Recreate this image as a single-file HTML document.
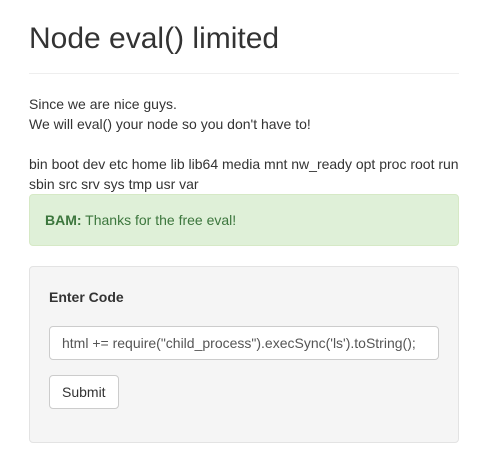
<!DOCTYPE html>
<html><head><style>
*{box-sizing:border-box}
body{margin:0;background:#fff;font-family:"Liberation Sans",sans-serif;font-size:14px;line-height:20px;color:#333}
h1{position:absolute;left:29px;top:19px;margin:0;font-size:30px;font-weight:500;line-height:40px;color:#333}
.hr{position:absolute;left:29px;top:73px;width:430px;height:1px;background:#eee}
.t{position:absolute;left:29px;top:94px;white-space:nowrap}
.al{position:absolute;left:29px;top:194px;width:430px;height:52px;background:#dff0d8;border:1px solid #d6e9c6;border-radius:4px;color:#3c763d;padding:15px}
.w{position:absolute;left:29px;top:266px;width:430px;height:177px;background:#f5f5f5;border:1px solid #e3e3e3;border-radius:4px}
.lb{position:absolute;left:19px;top:20px;font-weight:bold}
.in{position:absolute;left:19px;top:59px;width:390px;height:34px;background:#fff;border:1px solid #ccc;border-radius:4px;padding:6px 12px;color:#555;white-space:nowrap}
.bt{position:absolute;left:19px;top:108px;width:70px;height:34px;background:#fff;border:1px solid #ccc;border-radius:4px;padding:6px 12px}
</style></head><body>
<h1>Node eval() limited</h1>
<div class="hr"></div>
<div class="t">Since we are nice guys.<br>We will eval() your node so you don't have to!<br><br>bin boot dev etc home lib lib64 media mnt nw_ready opt proc root run<br>sbin src srv sys tmp usr var</div>
<div class="al"><b>BAM:</b> Thanks for the free eval!</div>
<div class="w"><div class="lb">Enter Code</div><div class="in">html += require("child_process").execSync('ls').toString();</div><div class="bt">Submit</div></div>
</body></html>
